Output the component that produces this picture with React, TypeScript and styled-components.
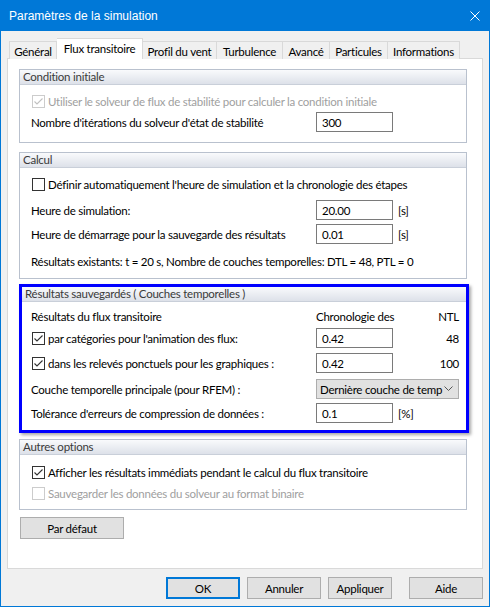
import React from "react";
import styled, { createGlobalStyle, css } from "styled-components";

const GlobalStyle = createGlobalStyle`
  html, body {
    margin: 0;
    padding: 0;
    background: #f0f0f0;
  }
  * {
    box-sizing: border-box;
  }
  body {
    font-family: Lato, "Liberation Sans", sans-serif;
    font-size: 11.5px;
    letter-spacing: -0.25px;
    color: #000;
  }
`;

const Window = styled.div`
  width: 490px;
  height: 607px;
  border: 1px solid #0078d7;
  border-top: none;
  background: #f0f0f0;
  display: flex;
  flex-direction: column;
`;

const TitleBar = styled.div`
  height: 31px;
  margin: 0 -1px;
  background: #0078d7;
  color: #fff;
  display: flex;
  align-items: center;
  justify-content: space-between;
  padding: 0 10px 0 9px;
  font-family: "Liberation Sans", sans-serif;
  font-size: 12px;
  letter-spacing: 0;
`;

const CloseIcon = () => (
  <svg width="10" height="10" viewBox="0 0 10 10">
    <path d="M0.5 0.5 L9.5 9.5 M9.5 0.5 L0.5 9.5" stroke="#fff" strokeWidth="1" />
  </svg>
);

const Body = styled.div`
  flex: 1;
  display: flex;
  flex-direction: column;
  padding: 7px 6px 0 6px;
`;

const TabStrip = styled.div`
  display: flex;
  align-items: flex-end;
  height: 21px;
  padding-left: 2px;
  margin-bottom: -1px;
  position: relative;
  z-index: 1;
`;

const Tab = styled.div<{ $w: number; $active?: boolean }>`
  width: ${(p) => p.$w}px;
  height: 18px;
  border: 1px solid #d9d9d9;
  border-bottom: none;
  background: #f0f0f0;
  display: flex;
  align-items: center;
  justify-content: center;
  padding-top: 1px;
  white-space: nowrap;
  & + & {
    border-left: none;
  }
  ${(p) =>
    p.$active &&
    css`
      height: 21px;
      background: #fff;
      padding-bottom: 3px;
    `}
`;

const Panel = styled.div`
  height: 511px;
  border: 1px solid #d9d9d9;
  background: #fff;
  padding: 10px 14px 0 11px;
  display: flex;
  flex-direction: column;
  align-items: flex-start;
`;

const Group = styled.div<{ $mt?: number; $highlight?: boolean; $pb: number }>`
  width: 448px;
  margin-top: ${(p) => p.$mt ?? 0}px;
  border: 1px solid #b9c1ce;
  padding-bottom: ${(p) => p.$pb}px;
  ${(p) =>
    p.$highlight &&
    css`
      width: 450px;
      border: 3px solid #0000ff;
      box-shadow: 2px 2px 3px rgba(0, 0, 0, 0.35);
    `}
`;

const GroupHeader = styled.div`
  height: 15px;
  border-bottom: 1px solid #c9cfd9;
  background: linear-gradient(#f9fafc, #dde1e9);
  color: #3a3a3a;
  padding-left: 3px;
  line-height: 14px;
  white-space: nowrap;
`;

const GroupBody = styled.div<{ $inset: number }>`
  padding: 0 7px 0 ${(p) => p.$inset}px;
`;

const Row = styled.div<{ $mt: number }>`
  height: 20px;
  margin-top: ${(p) => p.$mt}px;
  display: grid;
  grid-template-columns: 285px 77px 1fr;
  align-items: center;
  white-space: nowrap;
`;

const Label = styled.span<{ $disabled?: boolean }>`
  display: flex;
  align-items: center;
  color: ${(p) => (p.$disabled ? "#a0a0a0" : "#000")};
`;

const Wide = styled(Label)`
  grid-column: 1 / 4;
`;

const Box = styled.span<{ $disabled?: boolean }>`
  width: 13px;
  height: 13px;
  margin: 0 3px 0 1px;
  border: 1px solid ${(p) => (p.$disabled ? "#cccccc" : "#333333")};
  background: #fff;
  display: inline-flex;
  flex-shrink: 0;
`;

const Check = ({ checked, disabled }: { checked?: boolean; disabled?: boolean }) => (
  <Box $disabled={disabled}>
    {checked && (
      <svg width="11" height="11" viewBox="0 0 11 11">
        <path
          d="M1.5 5.5 L4 8 L9.5 2.5"
          fill="none"
          stroke={disabled ? "#c0c0c0" : "#333"}
          strokeWidth="1.1"
        />
      </svg>
    )}
  </Box>
);

const Input = styled.div`
  width: 77px;
  height: 20px;
  border: 1px solid #7a7a7a;
  background: #fff;
  padding-left: 5px;
  display: flex;
  align-items: center;
`;

const Unit = styled.span<{ $right?: boolean }>`
  padding-left: 5px;
  text-align: ${(p) => (p.$right ? "right" : "left")};
`;

const Select = styled.div`
  grid-column: 2 / 4;
  height: 20px;
  border: 1px solid #adadad;
  background: #e1e1e1;
  display: flex;
  align-items: center;
  justify-content: space-between;
  padding: 0 5px 0 3px;
  overflow: hidden;
`;

const Chevron = () => (
  <svg width="9" height="6" viewBox="0 0 9 6">
    <path d="M0.5 0.5 L4.5 4.5 L8.5 0.5" fill="none" stroke="#555" strokeWidth="1" />
  </svg>
);

const Button = styled.div<{ $w: number; $default?: boolean; $ml?: number }>`
  width: ${(p) => p.$w}px;
  height: 22px;
  margin-left: ${(p) => p.$ml ?? 0}px;
  border: 1px solid #adadad;
  background: #e1e1e1;
  display: flex;
  align-items: center;
  justify-content: center;
  ${(p) =>
    p.$default &&
    css`
      border: 2px solid #0078d7;
    `}
`;

const DefaultsButton = styled(Button)`
  margin-top: 7px;
  margin-left: 1px;
`;

const Footer = styled.div`
  display: flex;
  justify-content: flex-end;
  padding: 8px 0 0 0;
`;

const tabs: [string, number][] = [
  ["Général", 48],
  ["Flux transitoire", 86],
  ["Profil du vent", 74],
  ["Turbulence", 66],
  ["Avancé", 47],
  ["Particules", 58],
  ["Informations", 72],
];

export default function App() {
  return (
    <>
      <GlobalStyle />
      <Window>
        <TitleBar>
          <span>Paramètres de la simulation</span>
          <CloseIcon />
        </TitleBar>
        <Body>
          <TabStrip>
            {tabs.map(([t, w]) => (
              <Tab key={t} $w={w} $active={t === "Flux transitoire"}>
                {t}
              </Tab>
            ))}
          </TabStrip>
          <Panel>
            <Group $pb={10}>
              <GroupHeader>Condition initiale</GroupHeader>
              <GroupBody $inset={11}>
                <Row $mt={6}>
                  <Wide $disabled>
                    <Check checked disabled />
                    Utiliser le solveur de flux de stabilité pour calculer la condition initiale
                  </Wide>
                </Row>
                <Row $mt={1}>
                  <Label>Nombre d'itérations du solveur d'état de stabilité</Label>
                  <Input>300</Input>
                </Row>
              </GroupBody>
            </Group>

            <Group $mt={9} $pb={7}>
              <GroupHeader>Calcul</GroupHeader>
              <GroupBody $inset={11}>
                <Row $mt={6}>
                  <Wide>
                    <Check />
                    Définir automatiquement l'heure de simulation et la chronologie des étapes
                  </Wide>
                </Row>
                <Row $mt={6}>
                  <Label>Heure de simulation:</Label>
                  <Input>20.00</Input>
                  <Unit>[s]</Unit>
                </Row>
                <Row $mt={4}>
                  <Label>Heure de démarrage pour la sauvegarde des résultats</Label>
                  <Input>0.01</Input>
                  <Unit>[s]</Unit>
                </Row>
                <Row $mt={7}>
                  <Wide>
                    Résultats existants: t = 20 s, Nombre de couches temporelles: DTL = 48, PTL = 0
                  </Wide>
                </Row>
              </GroupBody>
            </Group>

            <Group $mt={5} $pb={7} $highlight>
              <GroupHeader>Résultats sauvegardés ( Couches temporelles )</GroupHeader>
              <GroupBody $inset={9}>
                <Row $mt={4}>
                  <Label>Résultats du flux transitoire</Label>
                  <Label>Chronologie des</Label>
                  <Unit $right>NTL</Unit>
                </Row>
                <Row $mt={2}>
                  <Label>
                    <Check checked />
                    par catégories pour l'animation des flux:
                  </Label>
                  <Input>0.42</Input>
                  <Unit $right>48</Unit>
                </Row>
                <Row $mt={5}>
                  <Label>
                    <Check checked />
                    dans les relevés ponctuels pour les graphiques :
                  </Label>
                  <Input>0.42</Input>
                  <Unit $right>100</Unit>
                </Row>
                <Row $mt={6}>
                  <Label>Couche temporelle principale (pour RFEM) :</Label>
                  <Select>
                    <span>Dernière couche de temp</span>
                    <Chevron />
                  </Select>
                </Row>
                <Row $mt={4}>
                  <Label>Tolérance d'erreurs de compression de données :</Label>
                  <Input>0.1</Input>
                  <Unit>[%]</Unit>
                </Row>
              </GroupBody>
            </Group>

            <Group $mt={6} $pb={6}>
              <GroupHeader>Autres options</GroupHeader>
              <GroupBody $inset={11}>
                <Row $mt={7}>
                  <Wide>
                    <Check checked />
                    Afficher les résultats immédiats pendant le calcul du flux transitoire
                  </Wide>
                </Row>
                <Row $mt={1}>
                  <Wide $disabled>
                    <Check disabled />
                    Sauvegarder les données du solveur au format binaire
                  </Wide>
                </Row>
              </GroupBody>
            </Group>

            <DefaultsButton $w={104}>Par défaut</DefaultsButton>
          </Panel>
          <Footer>
            <Button $w={74} $default>
              OK
            </Button>
            <Button $w={74} $ml={7}>
              Annuler
            </Button>
            <Button $w={64} $ml={7}>
              Appliquer
            </Button>
            <Button $w={74} $ml={17}>
              Aide
            </Button>
          </Footer>
        </Body>
      </Window>
    </>
  );
}
